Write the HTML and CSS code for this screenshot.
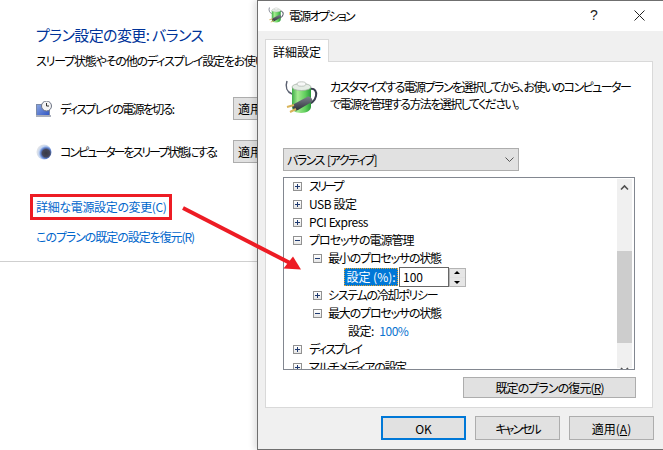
FILE: index.html
```html
<!DOCTYPE html>
<html lang="ja">
<head>
<meta charset="utf-8">
<title>電源オプション</title>
<link rel="stylesheet" href="styles.css">
</head>
<body>
<svg class="defs" width="0" height="0" aria-hidden="true">
  <defs>
    <linearGradient id="batt" x1="0" x2="1" y1="0" y2="0">
      <stop offset="0" stop-color="#3fae48"/><stop offset=".3" stop-color="#a4ea90"/><stop offset=".7" stop-color="#5fce5c"/><stop offset="1" stop-color="#2a9a3a"/>
    </linearGradient>
    <linearGradient id="mon" x1="0" x2="1" y1="0" y2="1">
      <stop offset="0" stop-color="#8ba6e0"/><stop offset="1" stop-color="#2f55c4"/>
    </linearGradient>
    <linearGradient id="plug" x1="0" x2="0" y1="0" y2="1">
      <stop offset="0" stop-color="#7c818c"/><stop offset="1" stop-color="#2e323a"/>
    </linearGradient>
    <radialGradient id="moon" cx=".64" cy=".58" r=".6">
      <stop offset="0" stop-color="#383a44"/><stop offset=".42" stop-color="#44465a"/><stop offset=".6" stop-color="#5f82d0"/><stop offset=".8" stop-color="#c4d6f2"/><stop offset="1" stop-color="#dfe2e8"/>
    </radialGradient>
    <symbol id="power" viewBox="0 0 34 34">
      <path d="M3 1C1 7 3 12 8 14" fill="none" stroke="#5a6070" stroke-width="1.500"/>
      <path d="M26 9c5-1 7 3 6 7-1 5-5 8-11 9" fill="none" stroke="#3a3f50" stroke-width="2"/>
      <path d="M8 7h19v20c0 3-4 6-10 6s-9-3-9-6z" fill="url(#batt)"/>
      <ellipse cx="17.500" cy="7" rx="9.500" ry="3.500" fill="#e4ece4" stroke="#a0aca0" stroke-width=".7"/>
      <ellipse cx="17.500" cy="4" rx="4.500" ry="2.200" fill="#f7f8f7" stroke="#aab2aa" stroke-width=".7"/>
      <path d="M10 24l13-7c2-1 4 0 5 2 1 2 0 3-2 4l-12 7c-2 1-4 0-5-2-1-2-1-3 1-4z" fill="url(#plug)"/>
      <path d="M10 25l-7 2M12 29l-6 3" stroke="#d9b45a" stroke-width="2"/>
    </symbol>
  </defs>
</svg>

<main class="page">
  <section class="plan">
    <h1 class="plan-title">プラン設定の変更: バランス</h1>
    <p class="plan-sub">スリープ状態やその他のディスプレイ設定をお使いのコンピューターで使用するように選択してください。</p>
    <div class="plan-row first">
      <svg class="plan-icon" viewBox="0 0 16 16"><rect x="0.500" y="3.500" width="13" height="11" fill="url(#mon)" stroke="#7b8aa8"/><rect x="0" y="14" width="15" height="2" fill="#a9aebb"/><circle cx="10.500" cy="5" r="5" fill="#f3f3f3" stroke="#6d7484"/><path d="M10.500 2v3h2.500" fill="none" stroke="#333" stroke-width="1"/></svg>
      <span class="plan-label ls-f">ディスプレイの電源を切る:</span>
      <span class="plan-btn">適用</span>
    </div>
    <div class="plan-row second">
      <svg class="plan-icon" viewBox="0 0 16 16"><circle cx="8" cy="8" r="7.500" fill="url(#moon)"/></svg>
      <span class="plan-label ls-g">コンピューターをスリープ状態にする:</span>
      <span class="plan-btn">適用</span>
    </div>
    <a class="advanced-link">詳細な電源設定の変更(C)</a>
    <a class="restore-link">このプランの既定の設定を復元(R)</a>
    <hr class="plan-rule">
  </section>

  <svg class="arrow" viewBox="0 0 663 450" aria-hidden="true">
    <path d="M183 208L290 263" stroke="#ed1c24" stroke-width="4" fill="none"/>
    <path d="M301 269.500L283.500 268.500L293 256.500z" fill="#ed1c24"/>
  </svg>

  <section class="dialog">
    <header class="titlebar">
      <svg class="title-icon"><use href="#power"/></svg>
      <span class="title-text">電源オプション</span>
      <span class="help">?</span>
      <svg class="close" viewBox="0 0 11 11"><path d="M.5.500l10 10M10.500.500l-10 10" stroke="#222" stroke-width="1" fill="none"/></svg>
    </header>
    <div class="dialog-body">
      <div class="tab">詳細設定</div>
      <div class="panel">
        <div class="intro">
          <svg class="intro-icon"><use href="#power"/></svg>
          <p class="intro-text">カスタマイズする電源プランを選択してから、お使いのコンピューター<br>で電源を管理する方法を選択してください。</p>
        </div>
        <div class="combo">
          <span class="combo-text">バランス [アクティブ]</span>
          <svg class="chev" viewBox="0 0 9 5"><path d="M.5.500l4 4 4-4" fill="none" stroke="#555" stroke-width="1"/></svg>
        </div>
        <div class="tree">
          <ul class="tree-list">
            <li class="node l0 ls-e"><i class="exp plus"></i>スリープ</li>
            <li class="node l0 ls-a"><i class="exp plus"></i>USB 設定</li>
            <li class="node l0 ls-a"><i class="exp plus"></i>PCI Express</li>
            <li class="node l0 ls-b"><i class="exp minus"></i>プロセッサの電源管理</li>
            <li class="node l1 ls-h"><i class="exp minus"></i>最小のプロセッサの状態</li>
            <li class="node l2 editing">
              <span class="edit-label">設定 (%):</span>
              <span class="edit-input">100</span>
              <span class="spin"><b class="spin-btn up"></b><b class="spin-btn down"></b></span>
            </li>
            <li class="node l1 ls-c"><i class="exp plus"></i>システムの冷却ポリシー</li>
            <li class="node l1 ls-h"><i class="exp minus"></i>最大のプロセッサの状態</li>
            <li class="node l2 ls-a">設定:&nbsp; <span class="value">100%</span></li>
            <li class="node l0 ls-d"><i class="exp plus"></i>ディスプレイ</li>
            <li class="node l0 ls-c"><i class="exp plus"></i>マルチメディアの設定</li>
          </ul>
          <div class="scrollbar">
            <svg class="sb-arrow" viewBox="0 0 15 17"><path d="M4 10.500l3.500-3.500 3.500 3.500" fill="none" stroke="#505050" stroke-width="1.600"/></svg>
            <div class="sb-track"><div class="sb-thumb"></div></div>
            <svg class="sb-arrow" viewBox="0 0 15 17"><path d="M4 7l3.500 3.500L11 7" fill="none" stroke="#505050" stroke-width="1.600"/></svg>
          </div>
        </div>
        <div class="restore-row"><span class="btn restore">既定のプランの復元(<u>R</u>)</span></div>
      </div>
      <div class="footer">
        <span class="btn foot ok">OK</span>
        <span class="btn foot cancel">キャンセル</span>
        <span class="btn foot">適用(<u>A</u>)</span>
      </div>
    </div>
  </section>
</main>
</body>
</html>
```
FILE: styles.css
```css
* { box-sizing: border-box; }
html, body { margin: 0; padding: 0; background: #fff; }
body {
  font-family: "Noto Sans CJK JP", "Noto Sans", sans-serif;
  font-size: 12px;
  font-feature-settings: "palt";
  color: #000;
}
.defs { position: absolute; }
.page { position: relative; width: 663px; height: 450px; overflow: hidden; background: #fff; }

.ls-a { letter-spacing: -.45px; }
.ls-b { letter-spacing: -1px; }
.ls-c { letter-spacing: -1.3px; }
.ls-d { letter-spacing: -1.7px; }
.ls-e { letter-spacing: -2.4px; }
.ls-f { letter-spacing: -1.7px; }
.ls-g { letter-spacing: -2px; }
.ls-h { letter-spacing: -1.2px; }

.plan { padding: 24px 0 0 36px; height: 450px; }
.plan-title { margin: 0; font-size: 15px; font-weight: 400; line-height: 22px; color: #003399; white-space: nowrap; letter-spacing: -.6px; }
.plan-sub { margin: 6px 0 0; line-height: 18px; white-space: nowrap; letter-spacing: -1.2px; }
.plan-row { display: flex; align-items: center; height: 23px; white-space: nowrap; }
.plan-row.first { margin-top: 27px; }
.plan-row.second { margin-top: 20px; }
.plan-icon { width: 16px; height: 16px; flex: none; }
.plan-label { margin-left: 8px; width: 173px; flex: none; }
.plan-btn { width: 60px; height: 23px; flex: none; line-height: 21px; padding-left: 4px; background: #e1e1e1; border: 1px solid #adadad; }
.advanced-link { display: block; width: 142px; height: 26px; margin: 31px 0 0 -6px; padding-left: 3px; border: 3px solid #ed1c24; line-height: 20px; color: #0066cc; white-space: nowrap; letter-spacing: -.35px; }
.restore-link { display: block; margin-top: 8px; line-height: 18px; color: #0066cc; white-space: nowrap; letter-spacing: -1.05px; }
.plan-rule { margin: 15px 0 0 -36px; border: 0; border-top: 1px solid #cfcfcf; }

.arrow { position: absolute; left: 0; top: 0; width: 663px; height: 450px; pointer-events: none; z-index: 3; }

.dialog { position: absolute; left: 257px; top: 0; width: 406px; height: 450px; z-index: 2; background: #f0f0f0; border: 1px solid #6f6f6f; border-right: 0; display: flex; flex-direction: column; box-shadow: -3px 0 6px rgba(0,0,0,.12); }
.titlebar { height: 30px; flex: none; background: #fff; display: flex; align-items: center; padding: 0 0 2px 10px; }
.title-icon { width: 16px; height: 16px; flex: none; }
.title-text { margin-left: 5px; flex: 1; letter-spacing: -1.7px; }
.help { width: 20px; text-align: center; font-family: "Liberation Sans", sans-serif; font-size: 14px; color: #222; margin-right: 30px; }
.close { width: 11px; height: 11px; flex: none; margin-right: 18px; }

.dialog-body { flex: 1; padding: 8px 10px 0 7px; display: flex; flex-direction: column; }
.tab { width: 64px; height: 23px; background: #fff; border: 1px solid #d9d9d9; border-bottom: 0; text-align: center; line-height: 23px; position: relative; z-index: 1; margin-bottom: -1px; }
.panel { height: 347px; flex: none; background: #fff; border: 1px solid #d9d9d9; padding: 0 0 0 17px; }

.intro { display: flex; height: 86px; padding: 18px 0 0 1px; }
.intro-icon { width: 34px; height: 34px; flex: none; }
.intro-text { margin: -2px 0 0 12px; width: 320px; line-height: 17px; letter-spacing: -1.55px; white-space: nowrap; }
.combo { width: 236px; height: 23px; background: #e1e1e1; border: 1px solid #adadad; display: flex; align-items: center; justify-content: space-between; padding: 0 4px 0 3px; }
.combo-text { letter-spacing: -1.5px; word-spacing: 2px; }
.chev { width: 9px; height: 5px; }

.tree { width: 352px; height: 193px; margin-top: 6px; background: #fff; border: 1px solid #828790; display: flex; overflow: hidden; }
.tree-list { list-style: none; margin: 0; padding: 0; flex: 1; min-width: 0; }
.node { height: 18px; line-height: 18px; display: flex; align-items: center; white-space: nowrap; position: relative; top: -1px; }
.l0 { padding-left: 9px; }
.l1 { padding-left: 29px; }
.l2 { padding-left: 64px; }
.exp { width: 9px; height: 9px; flex: none; margin-right: 7px; border: 1px solid #919191; background: linear-gradient(#fff, #e6e6e6); position: relative; }
.exp::before { content: ""; position: absolute; left: 1px; top: 3px; width: 5px; height: 1px; background: #1f3a70; }
.exp.plus::after { content: ""; position: absolute; left: 3px; top: 1px; width: 1px; height: 5px; background: #1f3a70; }
.l1 .exp { margin-right: 6px; }
.value { color: #0a74d0; margin-left: 3px; }

.editing { padding-left: 60px; height: 20px; margin-bottom: -1px; }
.edit-label { width: 54px; height: 18px; line-height: 16px; background: #0078d7; color: #fff; border: 1px dotted #e0a030; text-align: center; flex: none; }
.edit-input { width: 50px; height: 20px; margin-left: 1px; border: 1px solid #666; line-height: 18px; padding-left: 3px; flex: none; background: #fff; }
.spin { width: 17px; height: 19px; background: #e1e1e1; border: 1px solid #b4b4b4; display: flex; flex-direction: column; justify-content: space-between; flex: none; }
.spin-btn { height: 8px; background: #e6e6e6; position: relative; display: block; }
.spin-btn::after { content: ""; position: absolute; left: 4px; border-left: 3px solid transparent; border-right: 3px solid transparent; }
.up::after { top: 2px; border-bottom: 3px solid #000; }
.down::after { top: 3px; border-top: 3px solid #000; }

.scrollbar { width: 15px; flex: none; margin: 1px 2px 1px 0; background: #f0f0f0; display: flex; flex-direction: column; }
.sb-arrow { width: 15px; height: 17px; flex: none; }
.sb-track { flex: 1; padding-top: 55px; padding-bottom: 18px; }
.sb-thumb { height: 92px; background: #cdcdcd; }

.restore-row { display: flex; justify-content: flex-end; margin: 7px 16px 0 0; }
.btn { background: #e1e1e1; border: 1px solid #adadad; display: flex; align-items: center; justify-content: center; }
.btn u { text-decoration: underline; }
.restore { width: 173px; height: 21px; letter-spacing: -.9px; }

.footer { display: flex; gap: 9px; margin-top: 8px; padding-left: 116px; width: 410px; }
.foot { width: 85px; height: 24px; flex: none; }
.cancel { letter-spacing: -2px; }
.ok { border: 2px solid #0078d7; }
```
